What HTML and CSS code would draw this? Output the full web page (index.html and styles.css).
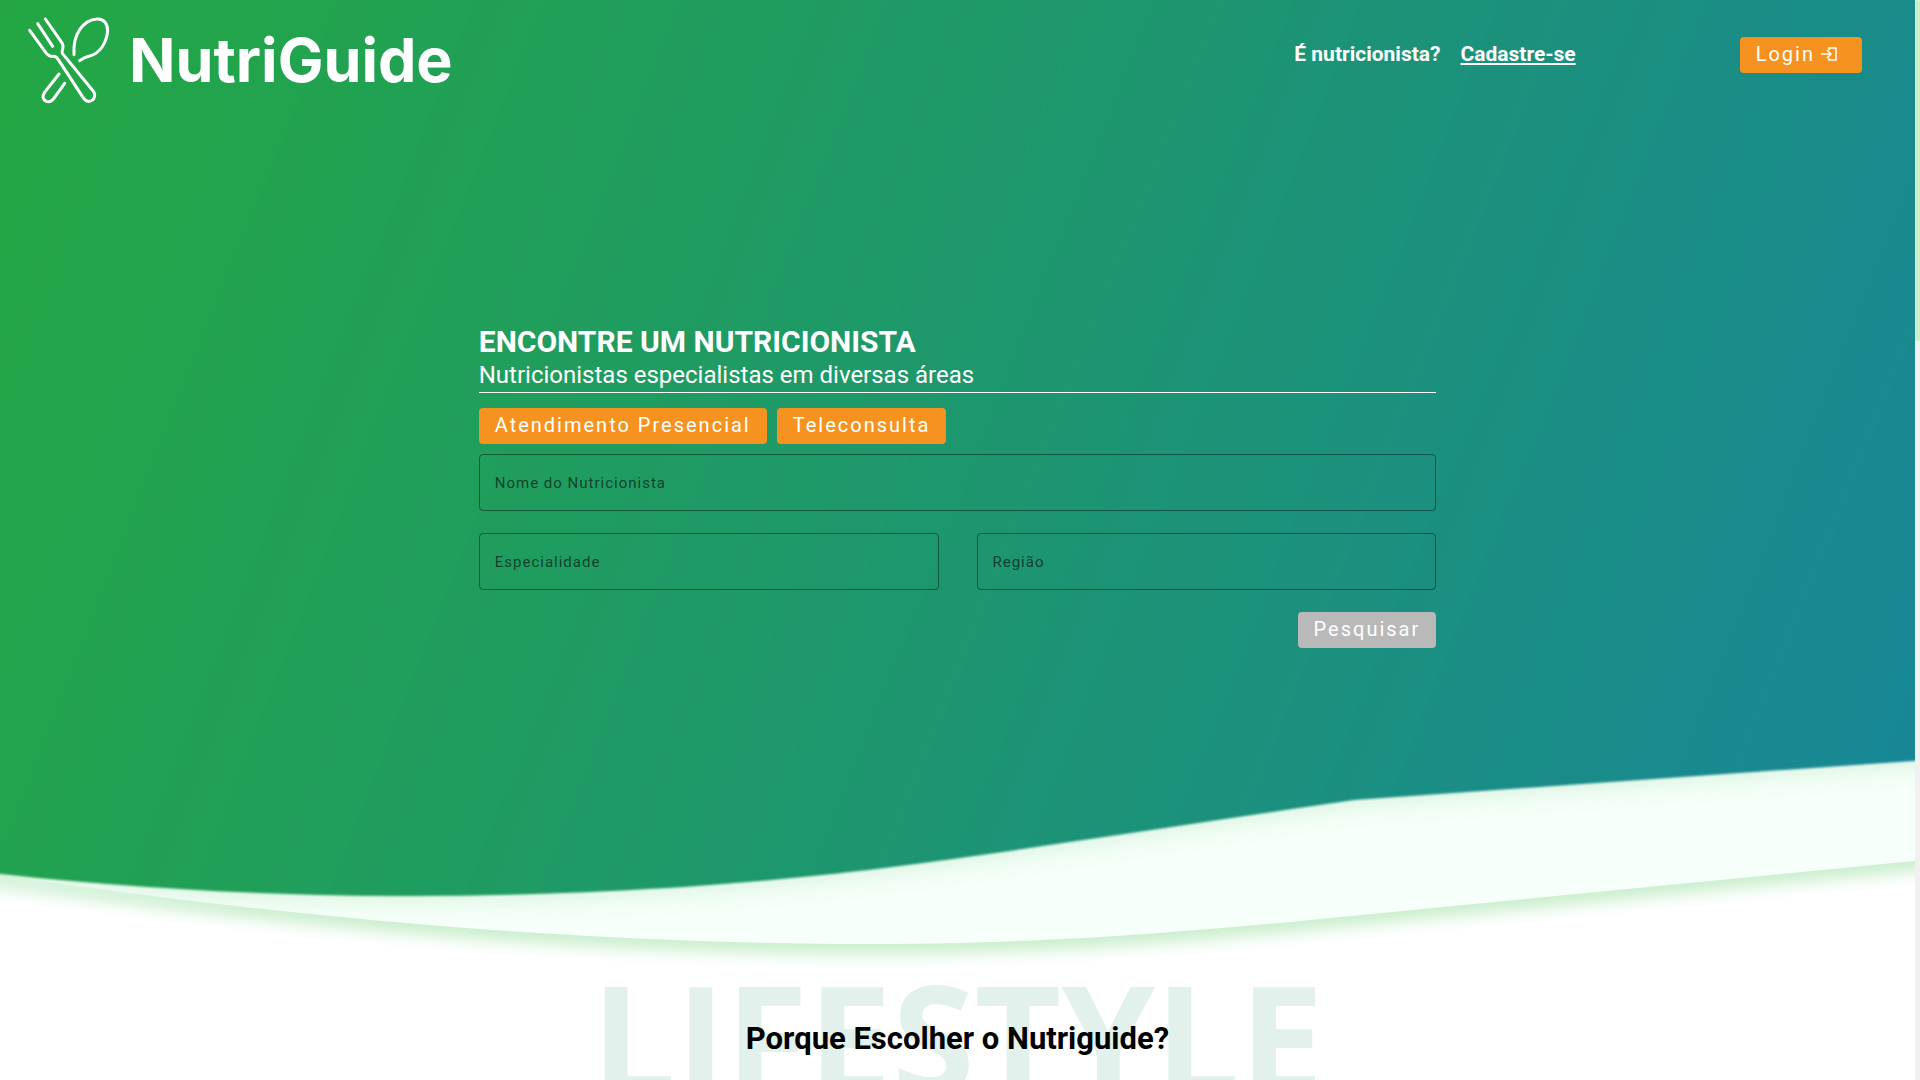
FILE: index.html
```html
<!DOCTYPE html>
<html lang="pt-BR">
<head>
<meta charset="utf-8">
<meta name="viewport" content="width=device-width, initial-scale=1">
<title>NutriGuide</title>
<link rel="stylesheet" href="styles.css">
</head>
<body>
<div class="page">
  <div class="hero">
    <svg class="hero-bg" viewBox="0 0 1915 990" preserveAspectRatio="none" aria-hidden="true">
      <defs>
        <linearGradient id="hero-gradient" gradientUnits="userSpaceOnUse" x1="-50" y1="80" x2="1960" y2="870">
          <stop offset="0" stop-color="#24a842"/>
          <stop offset="1" stop-color="#17869a"/>
        </linearGradient>
      </defs>
      <path class="wave-light" d="M-40 -40V870L0 875C290 918 580 944 870 944C1050 944 1200 931 1341 917L1955 857V-40Z"/>
      <path class="wave-dark" fill="url(#hero-gradient)" d="M-40 -40V870L0 874C130 888 270 896 400 896C640 896 820 878 960 858C1100 838 1230 818 1354 800L1955 758V-40Z"/>
    </svg>

    <header class="topbar">
      <a class="logo" href="#">
        <svg class="logo-icon" viewBox="80 48 252 264" aria-hidden="true">
          <path d="M88 91L136 157Q146 171 160 169Q168 169 174 179L248 292Q256 306 268 304Q284 300 283 284Q282 276 276 270L186 160Q184 154 187 148Q190 138 186 130L135 57"/>
          <path d="M112 71L157 139"/>
          <path d="M221 164C217 100 250 60 290 57C312 56 322 72 322 92C320 125 300 160 268 168Q250 172 238 182"/>
          <path d="M176 222L132 278Q122 296 138 304Q152 308 160 296L193 250"/>
        </svg>
        <span class="logo-name">NutriGuide</span>
      </a>
      <nav class="topnav">
        <span>É nutricionista?</span>
        <a href="#">Cadastre-se</a>
      </nav>
      <button class="btn" type="button">Login
        <svg class="btn-icon" viewBox="0 0 16 16" aria-hidden="true"><path d="M8 4V2H15V14H8V12M0 8H10M6 4L10 8L6 12"/></svg>
      </button>
    </header>

    <main class="search">
      <h1 class="search-title">ENCONTRE UM NUTRICIONISTA</h1>
      <p class="search-subtitle">Nutricionistas especialistas em diversas áreas</p>
      <div class="modes">
        <button class="btn" type="button">Atendimento Presencial</button>
        <button class="btn" type="button">Teleconsulta</button>
      </div>
      <form class="search-form">
        <div class="field field-wide">
          <input id="nome" type="text">
          <label for="nome">Nome do Nutricionista</label>
        </div>
        <div class="field">
          <input id="especialidade" type="text">
          <label for="especialidade">Especialidade</label>
        </div>
        <div class="field">
          <input id="regiao" type="text">
          <label for="regiao">Região</label>
        </div>
        <button class="btn btn-submit" type="submit" disabled>Pesquisar</button>
      </form>
    </main>
  </div>

  <section class="why">
    <span class="why-backdrop" aria-hidden="true">LIFESTYLE</span>
    <h2 class="why-title">Porque Escolher o Nutriguide?</h2>
  </section>
</div>
<div class="scroll-rail" aria-hidden="true"><div class="scroll-thumb"></div></div>
</body>
</html>
```
FILE: styles.css
```css
* { box-sizing: border-box; }

html { scrollbar-width: none; }

body {
  margin: 0;
  background: #fff;
  color: #000;
  font-family: Roboto, "Noto Sans", sans-serif;
  overflow-x: hidden;
}

h1, h2, p { margin: 0; }

.page { margin-right: 5px; overflow: hidden; }

.hero {
  position: relative;
  isolation: isolate;
  min-height: 971px;
  color: #fff;
}

.hero-bg {
  position: absolute;
  inset: 0;
  z-index: -1;
  width: 100%;
  height: 990px;
  overflow: visible;
}

.wave-light {
  fill: #f6fff9;
  filter: drop-shadow(0 10px 8px #c8eecb);
}

.wave-dark { filter: blur(1px) drop-shadow(0 8px 10px #def6e4); }

.topbar {
  display: flex;
  align-items: flex-start;
  padding: 16px 53px 0 27px;
}

.logo {
  display: flex;
  align-items: center;
  gap: 18px;
  margin-right: auto;
  color: #fff;
  text-decoration: none;
}

.logo-icon {
  width: 84px;
  height: 88px;
  fill: none;
  stroke: #fff;
  stroke-width: 9;
  stroke-linecap: round;
  stroke-linejoin: round;
}

.logo-name {
  font: 700 61px/88px Inter, sans-serif;
}

.topnav {
  display: flex;
  gap: 20px;
  margin: 26px 164px 0 0;
  font-size: 21px;
  font-weight: 700;
  line-height: 24px;
}

.topnav a { color: #fff; text-underline-offset: 2px; }

.btn {
  height: 36px;
  padding: 0 16px 2px;
  border: 0;
  border-radius: 4px;
  background: #f69320;
  color: #fff;
  font-family: inherit;
  font-size: 20px;
  line-height: 32px;
  letter-spacing: 2px;
  white-space: nowrap;
}

.topbar .btn {
  display: flex;
  align-items: center;
  gap: 6px;
  margin-top: 21px;
  padding-right: 25px;
}

.btn-icon {
  width: 16px;
  height: 16px;
  fill: none;
  stroke: #fff;
  stroke-width: 1.500;
}

.btn:disabled { background: #b9b9b9; }

.search {
  width: 50%;
  margin: 220px auto 0;
}

.search-title {
  font-size: 30px;
  line-height: 36px;
}

.search-subtitle {
  padding-bottom: 2px;
  border-bottom: 1px solid #fff;
  font-size: 24px;
  line-height: 30px;
}

.modes {
  display: flex;
  gap: 10px;
  margin: 15px 0 10px;
}

.search-form {
  display: grid;
  grid-template-columns: 1fr 1fr;
  gap: 22px 38px;
}

.field {
  display: grid;
  align-items: center;
}

.field-wide { grid-column: 1 / -1; }

.field input,
.field label { grid-area: 1 / 1; }

.field input {
  width: 100%;
  height: 57px;
  padding: 0 16px;
  border: 1px solid rgba(0, 0, 0, 0.42);
  border-radius: 4px;
  background: transparent;
  font: inherit;
}

.field label {
  padding-left: 16px;
  color: rgba(0, 0, 0, 0.6);
  font-size: 15px;
  line-height: 20px;
  letter-spacing: 1px;
  pointer-events: none;
}

.btn-submit {
  grid-column: 2;
  justify-self: end;
}

.why {
  display: grid;
  justify-items: center;
}

.why-backdrop,
.why-title { grid-area: 1 / 1; }

.why-backdrop {
  color: #e2f1eb;
  font: 700 150px/132px "Open Sans", sans-serif;
}

.why-title {
  z-index: 1;
  padding-top: 50px;
  font-size: 31px;
  line-height: 36px;
}

.scroll-rail {
  position: fixed;
  inset: 0 0 0 auto;
  width: 5px;
  background: #f1f1f1;
}

.scroll-thumb {
  height: 341px;
  border-radius: 3px;
  background: #caf0ca;
}
```
